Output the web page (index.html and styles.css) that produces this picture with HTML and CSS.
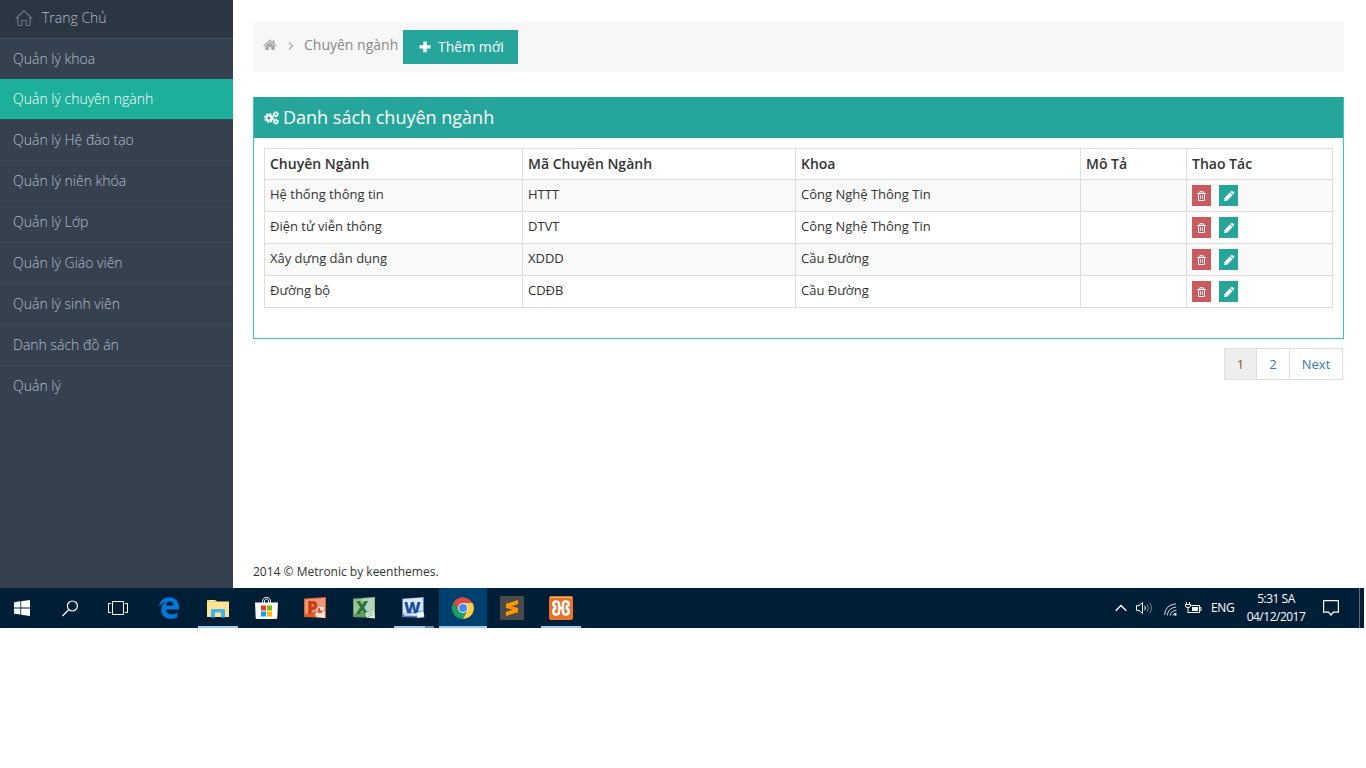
FILE: index.html
```html
<!DOCTYPE html>
<html lang="vi">
<head>
<meta charset="utf-8">
<title>Chuyên ngành</title>
<link rel="stylesheet" href="styles.css">
</head>
<body>
<svg class="defs" width="0" height="0">
  <symbol id="trash" viewBox="0 0 11 12"><path d="M1.300 3.500h8.400M3.800 3.300V1.700h3.400v1.600M2.500 3.700v6.800h6V3.700" fill="none" stroke="#fff" stroke-width="1" stroke-linejoin="round" stroke-linecap="round"/><path d="M4.500 5v4M6.500 5v4" stroke="#fff" stroke-width=".8"/></symbol>
  <symbol id="pencil" viewBox="0 0 12 12"><path fill="#fff" d="M1 11l.7-3.300 5.200-5.200 2.700 2.700-5.200 5.200zM7.500 1.900l.8-.8q.7-.5 1.300 0l1.400 1.400q.5.6 0 1.300l-.8.8z"/></symbol>
  <symbol id="office" viewBox="0 0 24 24"><path d="M1 2.500L23 1v21L1 21z" fill="currentColor"/><path d="M2 3.500L22 2v12L2 18z" fill="#fff" opacity=".38"/></symbol>
</svg>
<div class="page">
  <nav class="sidebar">
    <a class="item home"><svg width="18" height="18" viewBox="0 0 18 18"><path d="M1 9.500L9 1.500l8 8M3 8v8.500h3.800v-5h4.400v5H15V8" fill="none" stroke="#667383" stroke-width="1.200"/></svg><span>Trang Chủ</span></a>
    <a class="item">Quản lý khoa</a>
    <a class="item active">Quản lý chuyên ngành</a>
    <a class="item">Quản lý Hệ đào tạo</a>
    <a class="item">Quản lý niên khóa</a>
    <a class="item">Quản lý Lớp</a>
    <a class="item">Quản lý Giáo viên</a>
    <a class="item">Quản lý sinh viên</a>
    <a class="item">Danh sách đồ án</a>
    <a class="item">Quản lý</a>
  </nav>
  <main class="content">
    <div class="crumbs">
      <svg class="crumb-home" width="14" height="12" viewBox="0 0 14 12"><path fill="#aaa" d="M7 .6l2.800 2.400V1.200h1.700v3.200L13.800 6.400l-.8.8L7 2.200 1 7.200l-.8-.8zM7 2.900l4.800 4v4.200H8.200V8H5.800v3.100H2.200V6.900z"/></svg>
      <svg class="crumb-sep" width="6" height="10" viewBox="0 0 6 10"><path d="M1 1.500L4.500 5 1 8.500" fill="none" stroke="#aaa" stroke-width="1.300"/></svg>
      <span class="crumb-text">Chuyên ngành</span>
      <a class="add"><svg width="12" height="12" viewBox="0 0 12 12"><path fill="#fff" d="M4.300.5h3.400v3.800h3.800v3.200H7.700v3.800H4.300V7.500H.5V4.300h3.800z"/></svg><span>Thêm mới</span></a>
    </div>
    <section class="panel">
      <h1 class="panel-title"><svg width="15" height="14" viewBox="0 0 15 14"><g fill="none" stroke="#fff"><circle cx="5" cy="7" r="2.700" stroke-width="2.200"/><circle cx="5" cy="7" r="4.200" stroke-width="1.500" stroke-dasharray="1.900 1.400"/><circle cx="11.800" cy="3.300" r="1.700" stroke-width="1.500"/><circle cx="11.800" cy="3.300" r="2.600" stroke-width=".9" stroke-dasharray="1.200 .84"/><circle cx="11.800" cy="10.600" r="1.700" stroke-width="1.500"/><circle cx="11.800" cy="10.600" r="2.600" stroke-width=".9" stroke-dasharray="1.200 .84"/></g></svg><span>Danh sách chuyên ngành</span></h1>
      <div class="panel-body">
        <table class="grid">
          <colgroup><col class="c1"><col class="c2"><col class="c3"><col class="c4"><col class="c5"></colgroup>
          <thead><tr><th>Chuyên Ngành</th><th>Mã Chuyên Ngành</th><th>Khoa</th><th>Mô Tả</th><th>Thao Tác</th></tr></thead>
          <tbody>
            <tr><td>Hệ thống thông tin</td><td>HTTT</td><td>Công Nghệ Thông Tin</td><td></td><td><div class="acts"><a class="act del"><svg width="11" height="12"><use href="#trash"/></svg></a><a class="act edit"><svg width="12" height="12"><use href="#pencil"/></svg></a></div></td></tr>
            <tr><td>Điện tử viễn thông</td><td>DTVT</td><td>Công Nghệ Thông Tin</td><td></td><td><div class="acts"><a class="act del"><svg width="11" height="12"><use href="#trash"/></svg></a><a class="act edit"><svg width="12" height="12"><use href="#pencil"/></svg></a></div></td></tr>
            <tr><td>Xây dựng dân dụng</td><td>XDDD</td><td>Cầu Đường</td><td></td><td><div class="acts"><a class="act del"><svg width="11" height="12"><use href="#trash"/></svg></a><a class="act edit"><svg width="12" height="12"><use href="#pencil"/></svg></a></div></td></tr>
            <tr><td>Đường bộ</td><td>CDĐB</td><td>Cầu Đường</td><td></td><td><div class="acts"><a class="act del"><svg width="11" height="12"><use href="#trash"/></svg></a><a class="act edit"><svg width="12" height="12"><use href="#pencil"/></svg></a></div></td></tr>
          </tbody>
        </table>
      </div>
    </section>
    <div class="pager"><a class="pg current">1</a><a class="pg">2</a><a class="pg next">Next</a></div>
    <footer class="foot">2014 © Metronic by keenthemes.</footer>
  </main>
</div>
<div class="taskbar">
  <div class="system">
    <svg width="16" height="16" viewBox="0 0 16 16"><path fill="#fff" d="M0 2.200l6.400-.9v6.200H0zM7.200 1.200L16 0v7.500H7.200zM0 8.400h6.400v6.200L0 13.700zM7.200 8.400H16V16l-8.800-1.200z"/></svg>
    <svg width="16" height="17" viewBox="0 0 16 17"><path d="M6.600 9.900L.5 16" stroke="#fff" stroke-width="1.300"/><circle cx="10.400" cy="6" r="5" fill="none" stroke="#fff" stroke-width="1.200"/></svg>
    <svg class="views" width="20" height="14" viewBox="0 0 20 14"><path d="M4.500.5h11v13h-11zM3 2.500H.5v9H3M17 2.500h2.500v9H17" fill="none" stroke="#fff"/></svg>
  </div>
  <div class="apps">
    <span class="app"><svg width="22" height="22" viewBox="0 0 22 22"><path fill="#0078d7" d="M.8 9.800C1.500 4.300 5.500.2 11.200.2c6.300 0 9.800 4.600 9.800 10v2.300H7.800c.2 3.200 2.800 4.700 5.900 4.700 2.300 0 4.200-.6 5.600-1.500v4.500c-1.700 1-4 1.500-6.300 1.500-5.900 0-9.800-3.500-9.800-8.800 0-3.400 1.800-6.100 4.600-7.600-3.200.3-5.400 1.900-7 4.500zm7.100-1.200h7.400c0-2.400-1.200-4-3.500-4-2.200 0-3.500 1.600-3.900 4z"/></svg></span>
    <span class="app open"><svg width="22" height="19" viewBox="0 0 22 19"><path fill="#f2b928" d="M0 1h9l1 2H0z"/><path fill="#ffe394" d="M0 2.500h22V18H0z"/><path fill="#fff" d="M2 1h5v1H2z"/><path fill="#3db5e6" d="M4 18.500V11q0-1 1-1h12q1 0 1 1v7.500h-4v-5H8v5z"/></svg></span>
    <span class="app left"><svg width="23" height="24" viewBox="0 0 23 24"><path d="M7.500 8V5.500C7.500 0 15.500 0 15.500 5.500V8M9.500 7V4.800q2-3.500 4 0V7" fill="none" stroke="#fff"/><path fill="#fff" d="M0 6.500h23l-.7 15.200q-.1 1.300-1.400 1.300H2.100q-1.300 0-1.400-1.300z"/><path fill="#f03a20" d="M6 9.500h5v5H6z"/><path fill="#7fba00" d="M12 9.500h5v5h-5z"/><path fill="#00a4ef" d="M6 15.500h5v5H6z"/><path fill="#ffb900" d="M12 15.500h5v5h-5z"/></svg></span>
    <span class="app left ppt"><svg width="24" height="24"><use href="#office"/><text class="letter" x="4" y="18">P</text><path fill="#fbe6dd" d="M12 17l10-2v7l-9-1z"/><circle cx="17" cy="14.500" r="3.200" fill="#e34e20" stroke="#fbe6dd"/><path d="M17 14.500V11h4v3.500z" fill="#fbe6dd"/></svg></span>
    <span class="app left xls"><svg width="24" height="24"><use href="#office"/><path d="M11 2l12-1v14l-12 2z" fill="#fff" opacity=".3"/><text class="letter" x="4" y="18">X</text><path d="M13 17l9-2.500 1 8-8-1z" fill="#e9f4e8"/><path d="M15 18.500l6-2M16 20.500l5-1.500" stroke="#71a875" stroke-width=".8"/></svg></span>
    <span class="app left doc grouped"><svg width="24" height="24"><use href="#office"/><path d="M2 3l20-1.500v13L2 18z" fill="#fff" opacity=".7"/><text class="letter" x="3" y="17">W</text><path d="M15 17l7-2 1.500 5.500-7 1.500z" fill="#f3f7ff"/><path d="M3 18l11-1 2 3-13-.5z" fill="#fff" opacity=".8"/></svg></span>
    <span class="app focused"><svg width="22" height="22" viewBox="0 0 22 22"><path fill="#19a15f" d="M1.500 5.500A11 11 0 0 0 11 22l4.300-8.500H6.700z"/><path fill="#dd4b3e" d="M1.500 5.500A11 11 0 0 1 20.500 6H11l-4.300 7.500z"/><path fill="#ffcd42" d="M11 6h9.700A11 11 0 0 1 11 22l4.300-8.500z"/><circle cx="11" cy="11" r="5.100" fill="#f1f1f1"/><circle cx="11" cy="11" r="4" fill="#4387fd"/></svg></span>
    <span class="app"><svg width="24" height="24" viewBox="0 0 24 24"><rect width="24" height="24" rx="1.500" fill="#4b4b4b"/><path fill="#ff9800" d="M6 7.800L18 4v4.200l-6.500 2L18 12v4.200L6 20v-4.200l6.500-2L6 12z"/></svg></span>
    <span class="app open"><svg width="24" height="24" viewBox="0 0 24 24"><rect width="24" height="24" rx="2" fill="#e9732a"/><path d="M1 1.500h22" stroke="#f9b37e"/><g fill="none" stroke="#fff" stroke-width="2.500" stroke-linejoin="round"><path d="M7.300 10.700Q4.300 10.500 4.300 8T7.200 5.500 10 8.200v1.500q0 2.300 2 2.300t2-2.300V8.200q0-2.700 2.800-2.700T19.700 8t-3 2.700"/><path d="M7.300 12.300q-3 .2-3 3.200t2.900 3 2.800-2.700v-1.500q0-2.300 2-2.300t2 2.300v1.500q0 2.700 2.800 2.700t2.900-3-3-3.200"/></g></svg></span>
  </div>
  <div class="tray">
    <svg width="12" height="8" viewBox="0 0 12 8"><path d="M.7 6.800L6 1.500l5.300 5.300" fill="none" stroke="#fff" stroke-width="1.300"/></svg>
    <svg class="vol" width="17" height="14" viewBox="0 0 17 14"><path d="M.6 4.600h2.500L6.500 1.500v11L3.100 9.400H.6z" fill="none" stroke="#fff"/><path d="M8.700 4.800q1.500 2.200 0 4.400" fill="none" stroke="#fff"/><path d="M11 3.300q2.700 3.700 0 7.400M13.500 1.700q4 5.300 0 10.600" fill="none" stroke="#738493"/></svg>
    <svg class="wifi" width="13" height="13" viewBox="0 0 13 13"><g fill="none" stroke="#d5dce1" stroke-width="1"><path d="M.6 12Q1 2 12 .8M3.300 12.500Q4 5 12.200 4M6.200 12.500Q7 8 12.300 7.200M9 12.500q.3-2 3.300-2.300"/></g><circle cx="11.500" cy="11.700" r="1.100" fill="#fff"/></svg>
    <svg class="bat" width="17" height="13" viewBox="0 0 17 13"><path d="M5.500 3.500h9v7h-9M14.500 5.500H16v3h-1.500" fill="none" stroke="#fff"/><path d="M7 5h6v4H7zM1 0h1v2H1zM4 0h1v2H4zM2.500 5h1v5h3v1h-4z" fill="#fff"/><path d="M.5 2.500h5v1.500q0 1.500-2.500 1.500T.5 4z" fill="none" stroke="#fff"/></svg>
    <span class="lang">ENG</span>
    <div class="clock"><span>5:31 SA</span><span>04/12/2017</span></div>
    <svg class="note" width="16" height="16" viewBox="0 0 16 16"><path d="M.6.6h14.800v11.600h-5L8 15l-2.400-2.800h-5z" fill="none" stroke="#fff" stroke-width="1.200"/></svg>
    <span class="peek"></span>
  </div>
</div>
</body>
</html>
```
FILE: styles.css
```css
* { box-sizing: border-box; }
body { margin: 0; background: #fff; color: #333; font: 13px/18px "Open Sans", sans-serif; }
svg { display: block; flex: none; }
.defs { display: none; }
.page { display: flex; height: 588px; }
.sidebar { width: 233px; background: #364150; flex: none; }
.item { display: block; height: 41px; padding: 10px 13px 0; border-top: 1px solid #3d4957; color: #b4bcc8; font-size: 14px; line-height: 19px; font-weight: 300; }
.home { display: flex; gap: 9px; height: 38px; padding: 8px 15px 0; border: 0; background: #2c3542; }
.home svg { margin-top: 1px; }
.home + .item { border-top-color: #435060; }
.active { height: 40px; border: 0; background: #1caf9a; color: #fff; }
.content { flex: 1; min-width: 0; display: flex; flex-direction: column; padding: 22px 22px 0 20px; }
.crumbs { display: flex; height: 50px; padding: 8px 10px; background: #f7f7f7; color: #888; font-size: 14px; }
.crumb-home { margin-top: 9px; }
.crumb-sep { margin: 11px 10px 0 11px; }
.crumb-text { margin-top: 6px; width: 94px; white-space: nowrap; }
.add { display: flex; align-items: center; gap: 7px; height: 34px; width: 115px; margin-left: 5px; padding-left: 16px; background: #26a69a; color: #fff; }
.panel { margin-top: 25px; height: 242px; border: 1px solid #35c9bc; border-top: 0; }
.panel-title { display: flex; align-items: center; gap: 4px; height: 41px; margin: 0; padding-left: 10px; background: #26a69a; color: #fff; font-size: 18px; font-weight: 400; }
.panel-title span { padding-bottom: 2px; }
.panel-body { padding: 10px; }
.grid { width: 1069px; table-layout: fixed; border-collapse: collapse; }
.c1 { width: 258px; }
.c2 { width: 273px; }
.c3 { width: 285px; }
.c4 { width: 106px; }
.c5 { width: 146px; }
.grid th, .grid td { border: 1px solid #ddd; padding: 0 5px; text-align: left; vertical-align: top; }
.grid th { height: 31px; padding-top: 6px; font-size: 14px; font-weight: 600; }
.grid td { height: 32px; padding-top: 5px; }
.grid tbody tr:nth-child(odd) { background: #f9f9f9; }
.acts { display: flex; gap: 8px; }
.act { display: flex; align-items: center; justify-content: center; width: 19px; height: 21px; }
.del { background: #cb5a5e; }
.edit { background: #26a69a; }
.pager { display: flex; align-self: flex-end; margin: 9px 1px 0 0; border: 1px solid #ddd; }
.pg { height: 30px; width: 33px; border-left: 1px solid #ddd; line-height: 31px; text-align: center; color: #337ab7; }
.pg.current { width: 31px; border: 0; background: #eee; color: #8a5a20; }
.next { width: 53px; }
.foot { margin-top: 183px; font-size: 12px; }
.taskbar { display: flex; width: 1364px; height: 40px; background: #001e36; color: #fff; }
.system { display: flex; width: 145px; flex: none; padding-left: 14px; gap: 32px; align-items: center; }
.views { margin-left: -2px; }
.apps { display: flex; gap: 1px; }
.app { display: flex; width: 48px; height: 40px; align-items: center; justify-content: center; }
.left { padding-right: 2px; }
.open { background: linear-gradient(#9bcaf2, #9bcaf2) 4px 38px / 40px 2px no-repeat; }
.grouped { background: linear-gradient(90deg, #9bcaf2 31px, #6489a6 31px) 4px 38px / 40px 2px no-repeat; }
.focused { background: linear-gradient(#9bcaf2, #9bcaf2) 0 38px / 48px 2px no-repeat #00406f; }
.letter { font: 800 17px "Open Sans", sans-serif; }
.ppt { color: #e15b2b; }
.ppt .letter { fill: #c93d12; }
.xls { color: #5d9c62; }
.xls .letter { fill: #287532; }
.doc { color: #4d80c8; }
.doc .letter { fill: #164fa0; font-size: 16px; }
.tray { display: flex; align-items: center; margin-left: auto; font-size: 12px; }
.vol { margin-left: 9px; }
.wifi { margin: 3px 0 0 11px; }
.bat { margin-left: 8px; }
.lang { width: 24px; margin-left: 9px; letter-spacing: -.4px; }
.clock { display: flex; flex-direction: column; width: 60px; margin-left: 11px; text-align: center; letter-spacing: -.5px; white-space: nowrap; }
.note { margin: 0 0 0 17px; }
.peek { width: 5px; height: 40px; margin-left: 20px; border-left: 1px solid #5b6d7c; }
```
